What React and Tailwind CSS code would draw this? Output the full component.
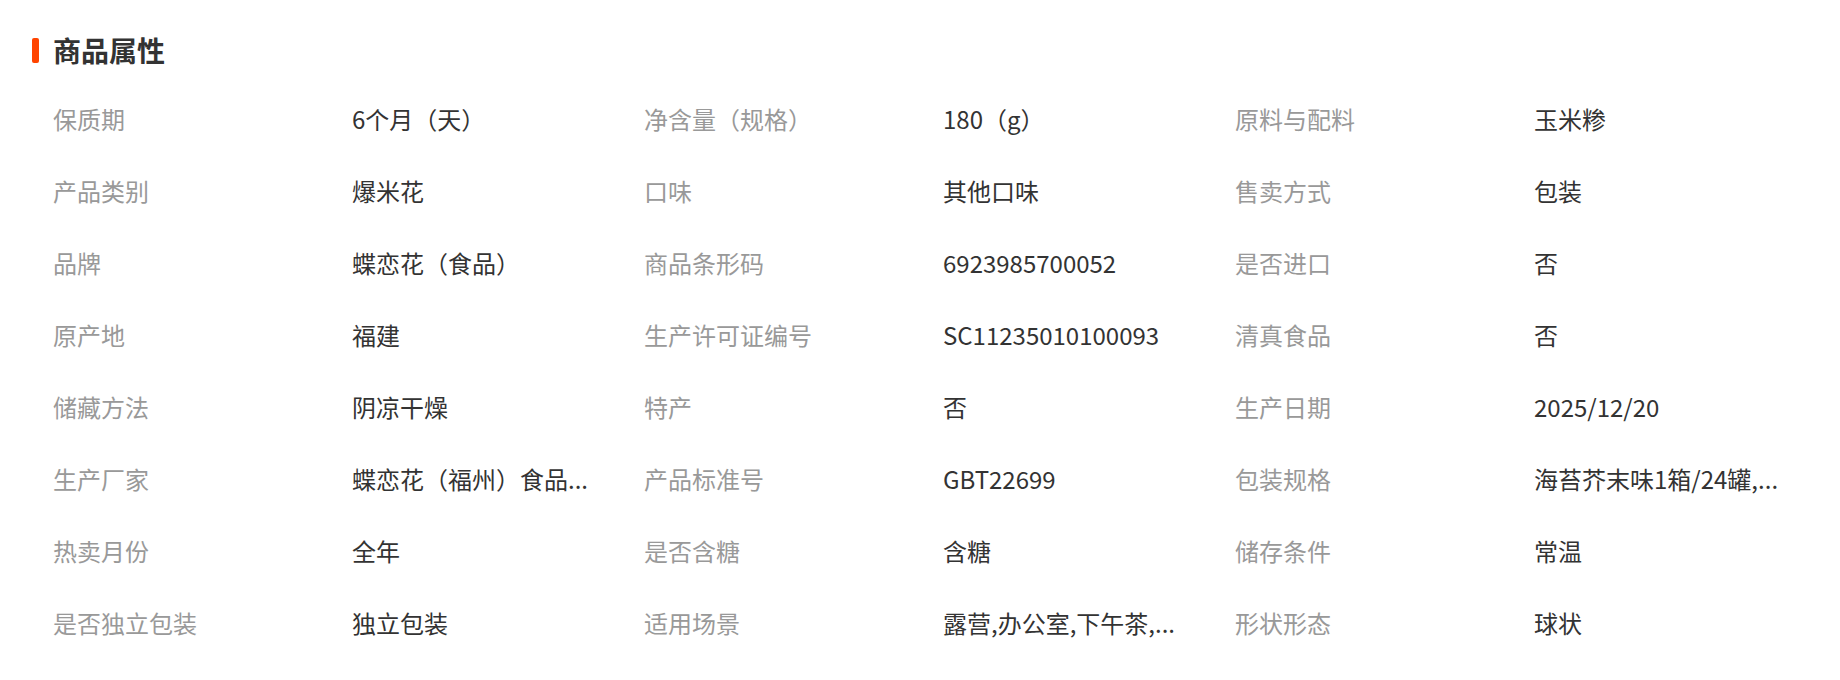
import React from "react";

/** Attribute rows: [label, value] triples per row */
const rows = [
  [["保质期", "6个月（天）"], ["净含量（规格）", "180（g）"], ["原料与配料", "玉米糁"]],
  [["产品类别", "爆米花"], ["口味", "其他口味"], ["售卖方式", "包装"]],
  [["品牌", "蝶恋花（食品）"], ["商品条形码", "6923985700052"], ["是否进口", "否"]],
  [["原产地", "福建"], ["生产许可证编号", "SC11235010100093"], ["清真食品", "否"]],
  [["储藏方法", "阴凉干燥"], ["特产", "否"], ["生产日期", "2025/12/20"]],
  [["生产厂家", "蝶恋花（福州）食品..."], ["产品标准号", "GBT22699"], ["包装规格", "海苔芥末味1箱/24罐,..."]],
  [["热卖月份", "全年"], ["是否含糖", "含糖"], ["储存条件", "常温"]],
  [["是否独立包装", "独立包装"], ["适用场景", "露营,办公室,下午茶,..."], ["形状形态", "球状"]],
];

export default function App() {
  return (
    <div
      className="h-[680px] w-[1840px] bg-white pl-[32px] pt-[37px]"
      style={{ fontFamily: '"Noto Sans CJK SC", "Noto Sans", sans-serif' }}
    >
      {/* Section title */}
      <div className="flex h-[26px] items-center gap-[14px]">
        <span className="h-[25px] w-[7px] rounded-[2px] bg-[#ff4400]" />
        <h2 className="text-[28px] font-bold leading-[26px] text-[#333333]">商品属性</h2>
      </div>

      {/* Attribute grid */}
      <div className="mt-[20px] grid grid-cols-[299px_292px_299px_292px_299px_1fr] pl-[21px]">
        {rows.flat().map(([label, value]) => (
          <React.Fragment key={label}>
            <div className="flex h-[72px] items-center whitespace-nowrap text-[24px] text-[#999999]">
              {label}
            </div>
            <div className="flex h-[72px] items-center overflow-hidden whitespace-nowrap text-[24px] text-[#333333]">
              {value}
            </div>
          </React.Fragment>
        ))}
      </div>
    </div>
  );
}
